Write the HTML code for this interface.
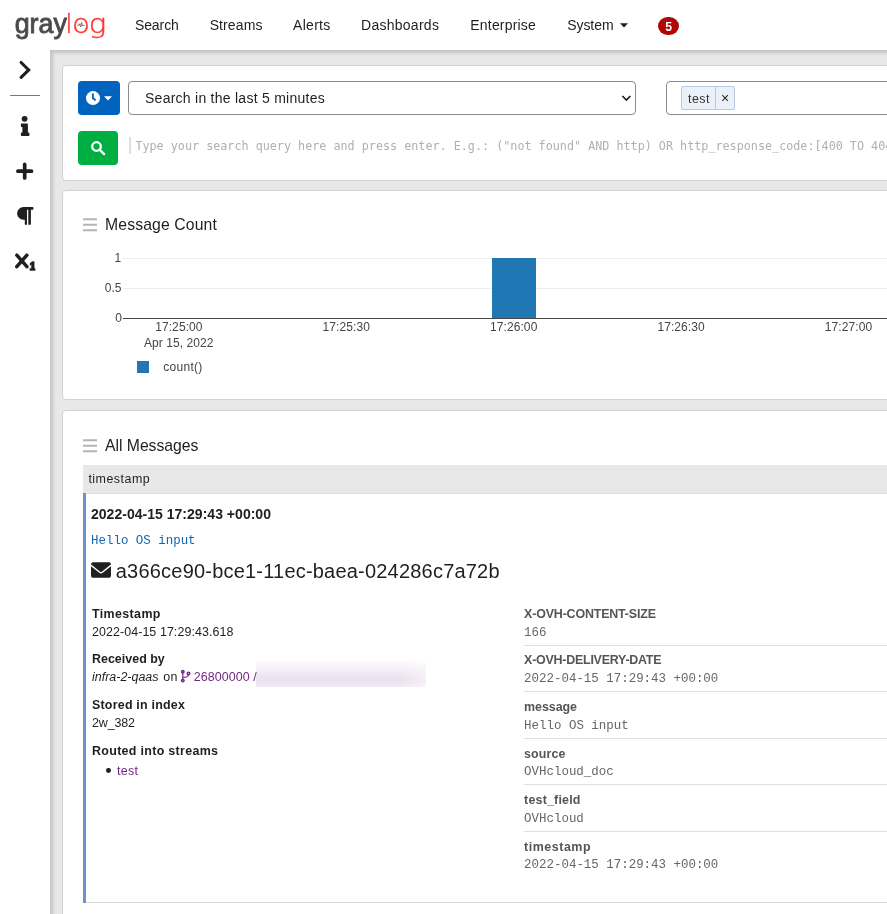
<!DOCTYPE html>
<html lang="en">
<head>
<meta charset="utf-8">
<title>Graylog - Search</title>
<style>
html,body{margin:0;padding:0;background:#e8e8e8;overflow:hidden}
#app{width:887px;height:914px;overflow:hidden;background:#e8e8e8;position:relative;font-family:"Liberation Sans",sans-serif;color:#1f1f1f;font-size:14px}
.t{position:absolute;white-space:pre;display:block;margin:0;padding:0;font-weight:400;text-decoration:none;color:#1f1f1f}
.abs{position:absolute}
#nav{left:0;top:0;width:960px;height:50px;background:#fff;box-shadow:0 3px 3px rgba(60,60,60,.2);z-index:5}
#side{left:0;top:50px;width:50px;height:880px;background:#fff;box-shadow:3px 3px 3px rgba(60,60,60,.2);z-index:6}
.panel{position:absolute;left:62px;width:900px;background:#fff;border:1px solid #d1d1d1;border-radius:4px;box-sizing:border-box}
#layer{position:absolute;left:0;top:0;width:887px;height:914px;z-index:10;pointer-events:none;will-change:transform}
</style>
</head>
<body>
<div id="app">
<!-- main panels -->
<div class="panel" style="top:65px;height:116px"></div>
<div class="panel" style="top:190px;height:210px"></div>
<div class="panel" style="top:410px;height:600px"></div>

<!-- sidebar -->
<div id="side" class="abs"></div>
<!-- navbar -->
<div id="nav" class="abs"></div>

<div id="layer">
<!-- logo -->
<svg class="abs" style="left:0;top:0" width="120" height="50" viewBox="0 0 120 50">
  <text x="14.7" y="32.9" font-family="Liberation Sans, sans-serif" font-weight="400" font-size="26.8" fill="#4b4b4b" stroke="#4b4b4b" stroke-width=".85" textLength="52.2" lengthAdjust="spacingAndGlyphs">gray</text>
  <g font-family="DejaVu Sans Light, DejaVu Sans, sans-serif" font-weight="200" font-size="26.5" fill="#ff3633" stroke="#ff3633" stroke-width=".45">
    <text x="65.3" y="32.8">l</text>
    <text x="72.1" y="32.8" textLength="18" lengthAdjust="spacingAndGlyphs">o</text>
    <text x="88.7" y="32.8" textLength="17.6" lengthAdjust="spacingAndGlyphs">g</text>
  </g>
  <path d="M77.4 25.3h1.4l.8-1.5 1 3.2 1-4.4.9 3.5.7-.8h1.4" fill="none" stroke="#4b4b4b" stroke-width=".75"/>
</svg>
<!-- system caret -->
<svg class="abs" style="left:620px;top:23px" width="8" height="5"><path d="M0 .3h8L4 4.5z" fill="#1f1f1f"/></svg>
<!-- badge -->
<div class="abs" style="left:658px;top:16.7px;width:21.2px;height:18.6px;border-radius:10px/9.3px;background:#ad0707"></div>

<!-- sidebar icons -->
<svg class="abs" style="left:0;top:50px" width="50" height="240" viewBox="0 0 50 240">
  <path d="M21.1 12.5l7.6 7.4-7.6 7.4" fill="none" stroke="#1f1f1f" stroke-width="3.1" stroke-linecap="round" stroke-linejoin="miter"/>
  <rect x="10" y="45" width="30" height="1" fill="#7a7a7a"/>
  <!-- info -->
  <circle cx="24.6" cy="68.8" r="2.9" fill="#1f1f1f"/>
  <path d="M21.6 73.6h5.6a.7.7 0 01.7.7v8.2h.8a.7.7 0 01.7.7v2a.7.7 0 01-.7.7h-7.1a.7.7 0 01-.7-.7v-2a.7.7 0 01.7-.7h.8v-5.5h-.8a.7.7 0 01-.7-.7v-2a.7.7 0 01.7-.7z" fill="#1f1f1f"/>
  <!-- plus -->
  <path d="M24.7 114.4v13.6M17.9 121.2h13.6" stroke="#1f1f1f" stroke-width="3.7" stroke-linecap="round"/>
  <!-- pilcrow -->
  <path d="M23.4 157.1h9.4a.6.6 0 01.6.6v1.4a.6.6 0 01-.6.6h-1.9v14.5a.6.6 0 01-.6.6h-1.4a.6.6 0 01-.6-.6v-14.5h-1.3v14.5a.6.6 0 01-.6.6h-1.0a.6.6 0 01-.6-.6v-4.5h-1.4a6.3 6.3 0 010-12.6z" fill="#1f1f1f"/>
  <!-- subscript -->
  <path d="M16.8 205.2l10.1 11.5M26.9 205.2l-10.1 11.5" stroke="#1f1f1f" stroke-width="3.5" stroke-linecap="round"/>
  <path d="M30 213.3l2.3-1.7h1.9v6.8h1v2.1h-5.4v-2.1h1.6v-3.9l-1.4.8z" fill="#1f1f1f" stroke="#1f1f1f" stroke-width=".4" stroke-linejoin="round"/>
</svg>

<!-- search bar -->
<div class="abs" style="left:78px;top:81px;width:42px;height:34px;border-radius:4px;background:#0063be"></div>
<svg class="abs" style="left:78px;top:81px" width="42" height="34" viewBox="0 0 42 34">
  <circle cx="15" cy="17.1" r="7" fill="#fff"/>
  <path d="M14.9 12.4v4.9l2.7 2" fill="none" stroke="#0063be" stroke-width="1.9"/>
  <path d="M26 15.2h8l-4 4.4z" fill="#fff"/>
</svg>
<div class="abs" style="left:128px;top:81px;width:508px;height:34px;border:1px solid #8a8a8a;border-radius:4px;box-sizing:border-box;background:#fff"></div>
<svg class="abs" style="left:621px;top:94px" width="11" height="9"><path d="M1.4 2l4 4 4-4" fill="none" stroke="#1f1f1f" stroke-width="1.7"/></svg>
<div class="abs" style="left:666px;top:81px;width:300px;height:34px;border:1px solid #8a8a8a;border-radius:4px;box-sizing:border-box;background:#fff"></div>
<div class="abs" style="left:681px;top:86px;width:54px;height:24px;border:1px solid #b9c7e9;border-radius:2px;box-sizing:border-box;background:#ecf0f8"></div>
<div class="abs" style="left:715px;top:86px;width:1px;height:24px;background:#b9c7e9"></div>

<div class="abs" style="left:78px;top:131px;width:40px;height:34px;border-radius:4px;background:#00ae42"></div>
<svg class="abs" style="left:78px;top:131px" width="40" height="34" viewBox="0 0 40 34">
  <circle cx="18.5" cy="15.5" r="4.3" fill="none" stroke="#fff" stroke-width="2.3"/>
  <path d="M21.8 18.8l4.3 4.3" stroke="#fff" stroke-width="2.4" stroke-linecap="round"/>
</svg>
<div class="abs" style="left:129px;top:137px;width:1.5px;height:17px;background:#dedede"></div>

<!-- widget hamburger icons -->
<svg class="abs" style="left:83px;top:218px" width="14" height="14"><path d="M0 1.3h14M0 6.8h14M0 12.3h14" stroke="#b5b5b5" stroke-width="1.9"/></svg>
<svg class="abs" style="left:83px;top:438.5px" width="14" height="14"><path d="M0 1.3h14M0 6.8h14M0 12.3h14" stroke="#b5b5b5" stroke-width="1.9"/></svg>

<!-- chart -->
<div class="abs" style="left:123px;top:258px;width:800px;height:1px;background:#eeeeee"></div>
<div class="abs" style="left:123px;top:288px;width:800px;height:1px;background:#eeeeee"></div>
<div class="abs" style="left:491.6px;top:258px;width:44.4px;height:60px;background:#1f77b4"></div>
<div class="abs" style="left:123px;top:317.5px;width:800px;height:1px;background:#444"></div>
<div class="abs" style="left:137px;top:361px;width:12px;height:12px;background:#1f77b4"></div>

<!-- message table -->
<div class="abs" style="left:83px;top:465px;width:830px;height:28px;background:#e8e8e8"></div>
<div class="abs" style="left:83px;top:493px;width:3px;height:410px;background:#7290d1"></div>
<div class="abs" style="left:86px;top:902px;width:830px;height:1px;background:#d8d8d8"></div>
<div class="abs" style="left:86px;top:493px;width:830px;height:1px;background:#dedede"></div>
<!-- envelope -->
<svg class="abs" style="left:91px;top:562px" width="20" height="16" viewBox="0 0 20 16">
  <rect x="0" y="0.3" width="20" height="15.4" rx="2" fill="#1f1f1f"/>
  <path d="M-.2 3.1l8.9 7.2a2.1 2.1 0 002.6 0l8.9-7.2" fill="none" stroke="#fff" stroke-width="1.35"/>
</svg>
<!-- node icon (code-branch) -->
<svg class="abs" style="left:179px;top:668px" width="14" height="16" viewBox="0 0 14 16">
  <path d="M3.8 3.8v8.8M9.5 5.5v.9c0 2.7-2.2 2.9-5.5 2.9" fill="none" stroke="#702785" stroke-width="1.15"/>
  <circle cx="3.8" cy="3.8" r="1.95" fill="#702785"/><circle cx="3.8" cy="12.6" r="1.95" fill="#702785"/><circle cx="9.5" cy="5.4" r="1.95" fill="#702785"/>
  <circle cx="3.8" cy="3.8" r=".55" fill="#b48cc0"/><circle cx="3.8" cy="12.6" r=".55" fill="#b48cc0"/><circle cx="9.5" cy="5.4" r=".6" fill="#d9c3e0"/>
</svg>
<!-- blurred redaction -->
<div class="abs" style="left:256px;top:660px;width:170px;height:27px;background:linear-gradient(90deg,rgba(255,255,255,0) 0%,rgba(255,255,255,0) 85%,rgba(255,255,255,.45) 100%),linear-gradient(180deg,#fdfcfe 0%,#f6f1f8 30%,#ece2f0 68%,#ede4f1 85%,#f2ecf5 100%)"></div>
<div class="abs" style="left:106.1px;top:768.3px;width:4.8px;height:4.8px;border-radius:50%;background:#1f1f1f"></div>
<!-- field separators -->
<div class="abs" style="left:524px;top:645px;width:400px;height:1px;background:#dfdfdf"></div>
<div class="abs" style="left:524px;top:691px;width:400px;height:1px;background:#dfdfdf"></div>
<div class="abs" style="left:524px;top:738px;width:400px;height:1px;background:#dfdfdf"></div>
<div class="abs" style="left:524px;top:784px;width:400px;height:1px;background:#dfdfdf"></div>
<div class="abs" style="left:524px;top:831px;width:400px;height:1px;background:#dfdfdf"></div>

<a class="t" href="#" style="left:134.90px;top:15.00px;font-size:14px;line-height:21px;letter-spacing:-0.077px;">Search</a>
<a class="t" href="#" style="left:209.70px;top:15.00px;font-size:14px;line-height:21px;letter-spacing:0.096px;">Streams</a>
<a class="t" href="#" style="left:293.00px;top:15.00px;font-size:14px;line-height:21px;letter-spacing:0.301px;">Alerts</a>
<a class="t" href="#" style="left:361.00px;top:15.00px;font-size:14px;line-height:21px;letter-spacing:0.270px;">Dashboards</a>
<a class="t" href="#" style="left:470.30px;top:15.00px;font-size:14px;line-height:21px;letter-spacing:0.189px;">Enterprise</a>
<a class="t" href="#" style="left:567.20px;top:15.00px;font-size:14px;line-height:21px;letter-spacing:-0.065px;">System</a>
<span class="t" style="left:665.21px;top:17.50px;font-size:12.2px;line-height:18px;font-weight:700;color:#fff;">5</span>
<span class="t" style="left:145.00px;top:88.00px;font-size:14px;line-height:21px;letter-spacing:0.258px;">Search in the last 5 minutes</span>
<span class="t" style="left:135.40px;top:136.80px;font-size:11.75px;line-height:18px;color:#b0b0b0;font-family:'DejaVu Sans Mono', monospace;">Type your search query here and press enter. E.g.: (&quot;not found&quot; AND http) OR http_response_code:[400 TO 404]</span>
<span class="t" style="left:688.00px;top:90.20px;font-size:12.44px;line-height:19px;color:#333333;letter-spacing:0.484px;">test</span>
<span class="t" style="left:721.01px;top:88.00px;font-size:14px;line-height:21px;">×</span>
<h2 class="t" style="left:105.00px;top:213.30px;font-size:15.75px;line-height:24px;letter-spacing:0.130px;">Message Count</h2>
<h2 class="t" style="left:105.00px;top:434.00px;font-size:15.75px;line-height:24px;letter-spacing:-0.023px;">All Messages</h2>
<span class="t" style="left:114.51px;top:249.30px;font-size:12px;line-height:18px;color:#444444;">1</span>
<span class="t" style="left:104.80px;top:279.30px;font-size:12px;line-height:18px;color:#444444;letter-spacing:-0.029px;">0.5</span>
<span class="t" style="left:115.21px;top:309.30px;font-size:12px;line-height:18px;color:#444444;">0</span>
<span class="t" style="left:155.20px;top:317.60px;font-size:12px;line-height:18px;color:#444444;letter-spacing:0.085px;">17:25:00</span>
<span class="t" style="left:322.60px;top:317.60px;font-size:12px;line-height:18px;color:#444444;letter-spacing:0.085px;">17:25:30</span>
<span class="t" style="left:490.00px;top:317.60px;font-size:12px;line-height:18px;color:#444444;letter-spacing:0.085px;">17:26:00</span>
<span class="t" style="left:657.40px;top:317.60px;font-size:12px;line-height:18px;color:#444444;letter-spacing:0.085px;">17:26:30</span>
<span class="t" style="left:824.80px;top:317.60px;font-size:12px;line-height:18px;color:#444444;letter-spacing:0.085px;">17:27:00</span>
<span class="t" style="left:144.00px;top:333.60px;font-size:12px;line-height:18px;color:#444444;letter-spacing:0.057px;">Apr 15, 2022</span>
<span class="t" style="left:163.30px;top:357.70px;font-size:12px;line-height:18px;color:#444444;letter-spacing:0.277px;">count()</span>
<span class="t" style="left:88.40px;top:470.00px;font-size:12.44px;line-height:19px;letter-spacing:0.492px;">timestamp</span>
<span class="t" style="left:91.00px;top:503.60px;font-size:14px;line-height:21px;font-weight:700;letter-spacing:0.022px;">2022-04-15 17:29:43 +00:00</span>
<span class="t" style="left:91.00px;top:531.90px;font-size:12.44px;line-height:19px;color:#1165b3;font-family:'Liberation Mono', monospace;letter-spacing:0.006px;">Hello OS input</span>
<h3 class="t" style="left:115.80px;top:555.70px;font-size:20px;line-height:30px;letter-spacing:0.205px;">a366ce90-bce1-11ec-baea-024286c7a72b</h3>
<span class="t" style="left:92.00px;top:605.20px;font-size:12.44px;line-height:19px;font-weight:700;letter-spacing:0.374px;">Timestamp</span>
<span class="t" style="left:92.00px;top:622.60px;font-size:12.44px;line-height:19px;letter-spacing:0.074px;">2022-04-15 17:29:43.618</span>
<span class="t" style="left:92.00px;top:649.60px;font-size:12.44px;line-height:19px;font-weight:700;letter-spacing:0.019px;">Received by</span>
<span class="t" style="left:92.00px;top:667.70px;font-size:12.44px;line-height:19px;font-style:italic;letter-spacing:0.010px;">infra-2-qaas</span>
<span class="t" style="left:163.30px;top:667.70px;font-size:12.44px;line-height:19px;letter-spacing:0.278px;">on</span>
<a class="t" href="#" style="left:193.80px;top:667.70px;font-size:12.44px;line-height:19px;color:#702785;letter-spacing:0.070px;">26800000</a>
<span class="t" style="left:253.20px;top:667.70px;font-size:12.44px;line-height:19px;color:#702785;">/</span>
<span class="t" style="left:92.00px;top:696.20px;font-size:12.44px;line-height:19px;font-weight:700;letter-spacing:0.217px;">Stored in index</span>
<span class="t" style="left:92.00px;top:713.50px;font-size:12.44px;line-height:19px;letter-spacing:-0.130px;">2w_382</span>
<span class="t" style="left:92.00px;top:742.20px;font-size:12.44px;line-height:19px;font-weight:700;letter-spacing:0.318px;">Routed into streams</span>
<a class="t" href="#" style="left:117.00px;top:762.20px;font-size:12.44px;line-height:19px;color:#702785;letter-spacing:0.334px;">test</a>
<span class="t" style="left:524.10px;top:605.00px;font-size:12.44px;line-height:19px;font-weight:700;color:#555555;letter-spacing:-0.169px;">X-OVH-CONTENT-SIZE</span>
<span class="t" style="left:524.10px;top:624.20px;font-size:12.44px;line-height:19px;color:#666666;font-family:'Liberation Mono', monospace;letter-spacing:0.001px;">166</span>
<span class="t" style="left:524.10px;top:651.00px;font-size:12.44px;line-height:19px;font-weight:700;color:#555555;letter-spacing:-0.235px;">X-OVH-DELIVERY-DATE</span>
<span class="t" style="left:524.10px;top:669.80px;font-size:12.44px;line-height:19px;color:#666666;font-family:'Liberation Mono', monospace;letter-spacing:0.006px;">2022-04-15 17:29:43 +00:00</span>
<span class="t" style="left:524.10px;top:697.60px;font-size:12.44px;line-height:19px;font-weight:700;color:#555555;letter-spacing:-0.050px;">message</span>
<span class="t" style="left:524.10px;top:716.90px;font-size:12.44px;line-height:19px;color:#666666;font-family:'Liberation Mono', monospace;letter-spacing:0.006px;">Hello OS input</span>
<span class="t" style="left:524.10px;top:744.50px;font-size:12.44px;line-height:19px;font-weight:700;color:#555555;letter-spacing:0.084px;">source</span>
<span class="t" style="left:524.10px;top:762.50px;font-size:12.44px;line-height:19px;color:#666666;font-family:'Liberation Mono', monospace;letter-spacing:0.005px;">OVHcloud_doc</span>
<span class="t" style="left:524.10px;top:791.20px;font-size:12.44px;line-height:19px;font-weight:700;color:#555555;letter-spacing:0.189px;">test_field</span>
<span class="t" style="left:524.10px;top:809.70px;font-size:12.44px;line-height:19px;color:#666666;font-family:'Liberation Mono', monospace;letter-spacing:0.005px;">OVHcloud</span>
<span class="t" style="left:524.10px;top:837.60px;font-size:12.44px;line-height:19px;font-weight:700;color:#555555;letter-spacing:0.531px;">timestamp</span>
<span class="t" style="left:524.10px;top:855.60px;font-size:12.44px;line-height:19px;color:#666666;font-family:'Liberation Mono', monospace;letter-spacing:0.006px;">2022-04-15 17:29:43 +00:00</span>
</div>
</div>
</body>
</html>
